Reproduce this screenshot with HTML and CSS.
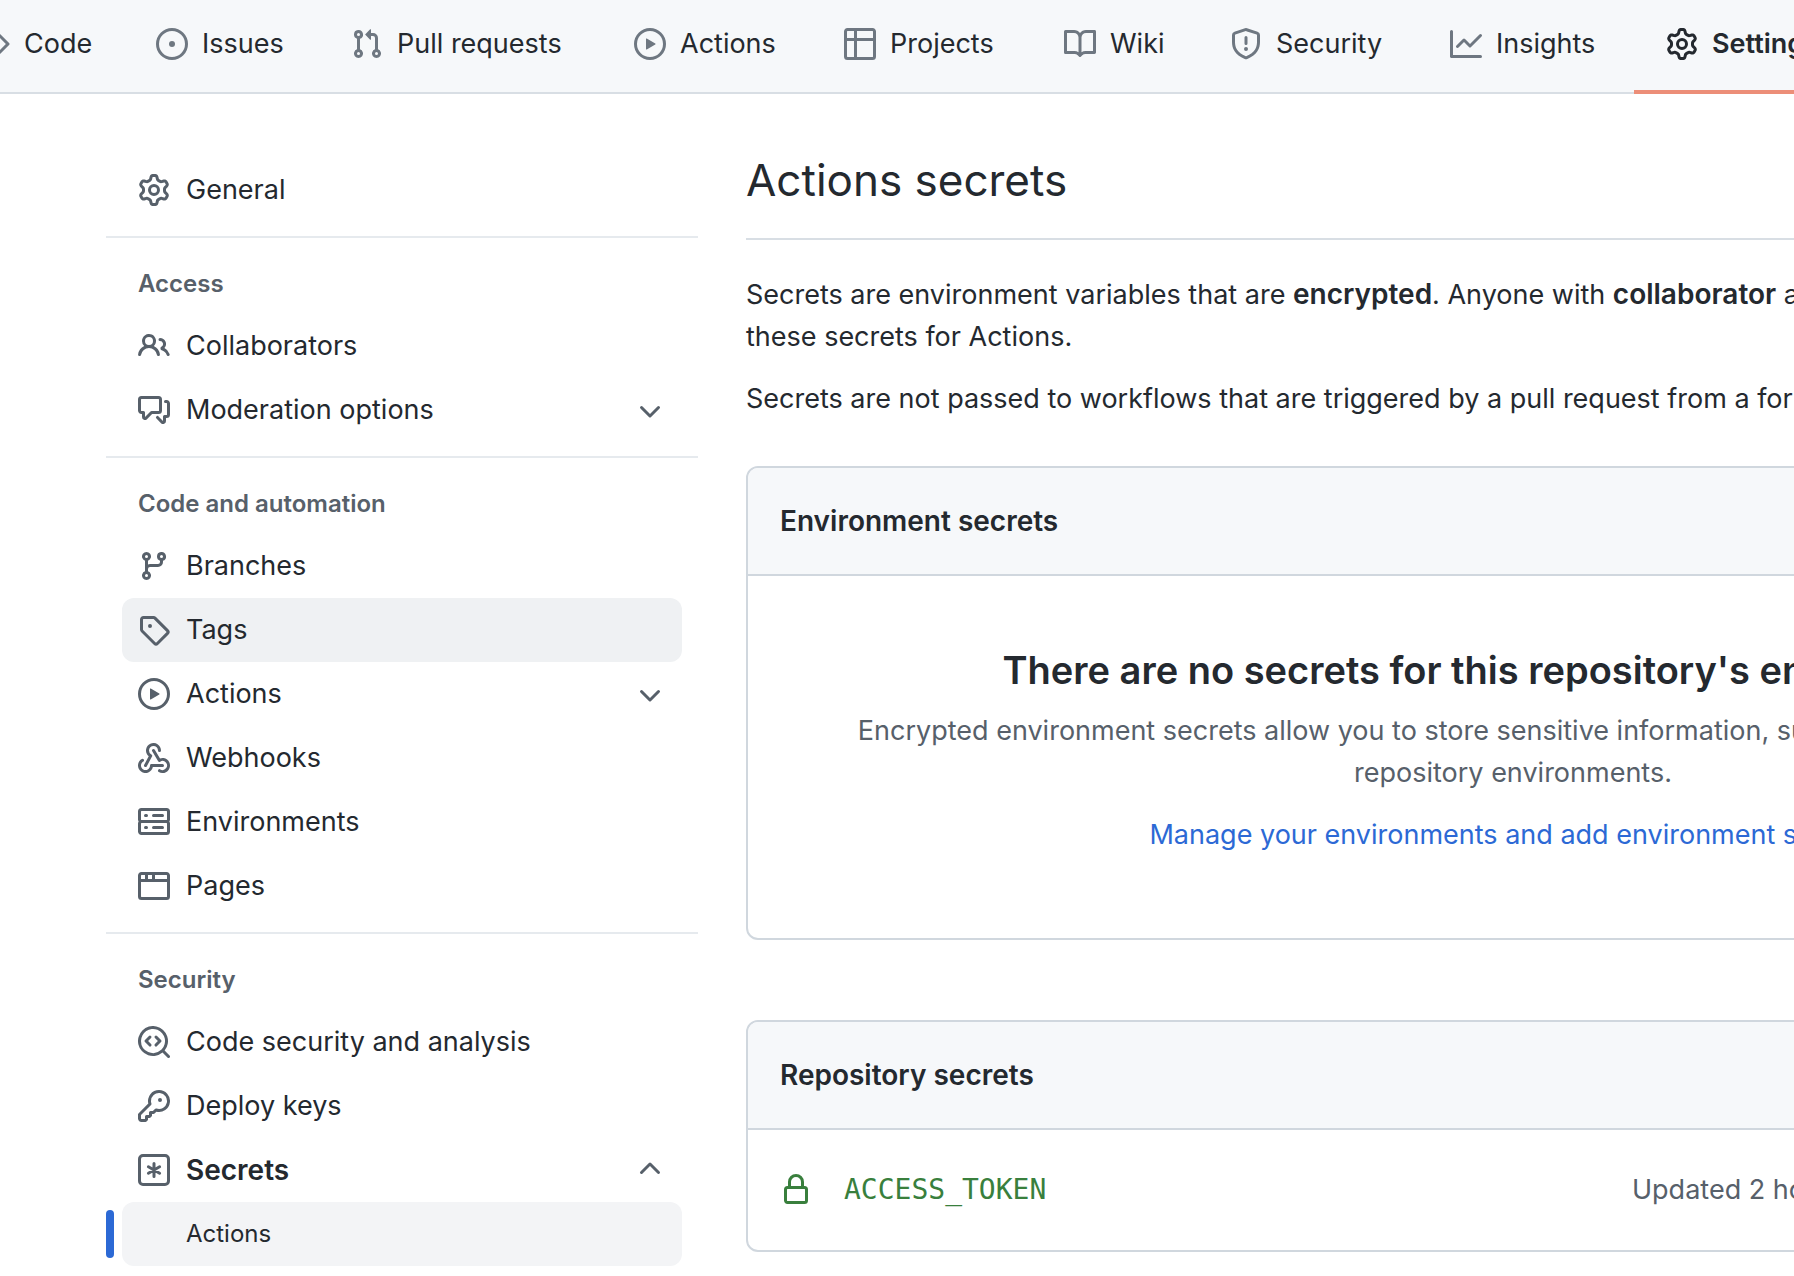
FILE: index.html
```html
<!DOCTYPE html>
<html lang="en">
<head>
<meta charset="utf-8">
<title>Actions secrets</title>
<link rel="stylesheet" href="styles.css">
</head>
<body>
<svg class="sprite" aria-hidden="true">
  <symbol id="i-code" viewBox="0 0 16 16"><path d="M4.72 3.22a.75.75 0 011.06 1.06L2.06 8l3.72 3.72a.75.75 0 11-1.06 1.06L.47 8.53a.75.75 0 010-1.06l4.25-4.25zm6.56 0a.75.75 0 10-1.06 1.06L13.94 8l-3.72 3.72a.75.75 0 101.06 1.06l4.25-4.25a.75.75 0 000-1.06l-4.25-4.25z"/></symbol>
  <symbol id="i-issue" viewBox="0 0 16 16"><path d="M8 9.5a1.5 1.5 0 100-3 1.5 1.5 0 000 3z"/><path fill-rule="evenodd" d="M8 0a8 8 0 100 16A8 8 0 008 0zM1.5 8a6.5 6.5 0 1113 0 6.5 6.5 0 01-13 0z"/></symbol>
  <symbol id="i-pr" viewBox="0 0 16 16"><path fill-rule="evenodd" d="M7.177 3.073L9.573.677A.25.25 0 0110 .854v4.792a.25.25 0 01-.427.177L7.177 3.427a.25.25 0 010-.354zM3.75 2.5a.75.75 0 100 1.5.75.75 0 000-1.5zm-2.25.75a2.25 2.25 0 113 2.122v5.256a2.251 2.251 0 11-1.5 0V5.372A2.25 2.25 0 011.5 3.25zM11 2.5h-1V4h1a1 1 0 011 1v5.628a2.251 2.251 0 101.5 0V5A2.5 2.5 0 0011 2.5zm1 10.25a.75.75 0 111.5 0 .75.75 0 01-1.5 0zM3.75 12a.75.75 0 100 1.5.75.75 0 000-1.5z"/></symbol>
  <symbol id="i-play" viewBox="0 0 16 16"><path fill-rule="evenodd" d="M1.5 8a6.5 6.5 0 1113 0 6.5 6.5 0 01-13 0zM8 0a8 8 0 100 16A8 8 0 008 0zM6.379 5.227A.25.25 0 006 5.442v5.117a.25.25 0 00.379.214l4.264-2.559a.25.25 0 000-.428L6.379 5.227z"/></symbol>
  <symbol id="i-table" viewBox="0 0 16 16"><path fill-rule="evenodd" d="M0 1.75C0 .784.784 0 1.75 0h12.5C15.216 0 16 .784 16 1.75v12.5A1.75 1.75 0 0114.25 16H1.75A1.75 1.75 0 010 14.25V1.75zM1.5 6.5v7.75c0 .138.112.25.25.25H5v-8H1.5zM5 5H1.5V1.75a.25.25 0 01.25-.25H5V5zm1.500 1.500v8h7.750a.25.25 0 00.25-.25V6.500h-8zm8-1.500h-8V1.500h7.750a.25.25 0 01.25.25V5z"/></symbol>
  <symbol id="i-book" viewBox="0 0 16 16"><path fill-rule="evenodd" d="M0 1.75A.75.75 0 01.75 1h4.253c1.227 0 2.317.59 3 1.501A3.744 3.744 0 0111.006 1h4.245a.75.75 0 01.75.75v10.5a.75.75 0 01-.75.75h-4.507a2.25 2.25 0 00-1.591.659l-.622.621a.75.75 0 01-1.060 0l-.622-.621A2.250 2.250 0 005.258 13H.75a.75.75 0 01-.75-.75V1.750zm8.755 3a2.250 2.250 0 012.250-2.250H14.500v9h-3.757c-.71 0-1.400.201-1.992.572l.004-7.322zm-1.504 7.324l.004-5.073-.002-2.253A2.250 2.250 0 005.003 2.500H1.500v9h3.757a3.750 3.750 0 011.994.574z"/></symbol>
  <symbol id="i-shield" viewBox="0 0 16 16"><path fill-rule="evenodd" d="M7.467.133a1.750 1.750 0 011.066 0l5.250 1.680A1.750 1.750 0 0115 3.480V7c0 1.566-.32 3.182-1.303 4.682-.983 1.498-2.585 2.813-5.032 3.855a1.700 1.700 0 01-1.330 0c-2.447-1.042-4.049-2.357-5.032-3.855C1.320 10.182 1 8.566 1 7V3.480a1.750 1.750 0 011.217-1.667l5.250-1.680zm.610 1.429a.25.25 0 00-.153 0l-5.250 1.680a.25.25 0 00-.174.238V7c0 1.358.275 2.666 1.057 3.860.784 1.194 2.121 2.340 4.366 3.297a.200.200 0 00.154 0c2.245-.956 3.582-2.104 4.366-3.298C13.225 9.666 13.500 8.360 13.500 7V3.480a.25.25 0 00-.174-.237l-5.250-1.680zM9 10.500a1 1 0 11-2 0 1 1 0 012 0zM8.750 4.750a.75.75 0 00-1.500 0v3a.75.75 0 001.500 0v-3z"/></symbol>
  <symbol id="i-graph" viewBox="0 0 16 16"><path fill-rule="evenodd" d="M1.500 1.750a.75.75 0 00-1.500 0v12.500c0 .414.336.75.75.75h14.500a.75.75 0 000-1.500H1.500V1.750zm14.280 2.530a.75.75 0 00-1.060-1.060L10 7.940 7.530 5.470a.75.75 0 00-1.060 0L3.220 8.720a.75.75 0 001.060 1.060L7 7.060l2.470 2.470a.75.75 0 001.060 0l5.250-5.250z"/></symbol>
  <symbol id="i-gear" viewBox="0 0 16 16"><path fill-rule="evenodd" d="M7.429 1.525a6.593 6.593 0 011.142 0c.036.003.108.036.137.146l.289 1.105c.147.56.55.967.997 1.189.174.086.341.183.501.290.417.278.970.423 1.530.270l1.102-.303c.110-.030.175.016.195.046.219.310.410.641.573.989.014.031.022.110-.059.190l-.815.806c-.411.406-.562.957-.530 1.456a4.588 4.588 0 010 .582c-.032.499.119 1.050.530 1.456l.815.806c.080.080.073.159.059.190a6.494 6.494 0 01-.573.990c-.020.029-.086.074-.195.045l-1.103-.303c-.559-.153-1.112-.008-1.529.270-.160.107-.327.204-.500.290-.449.222-.851.628-.998 1.189l-.289 1.105c-.029.110-.101.143-.137.146a6.613 6.613 0 01-1.142 0c-.036-.003-.108-.037-.137-.146l-.289-1.105c-.147-.560-.550-.967-.997-1.189a4.502 4.502 0 01-.501-.290c-.417-.278-.970-.423-1.530-.270l-1.102.303c-.110.030-.175-.016-.195-.046a6.492 6.492 0 01-.573-.989c-.014-.031-.022-.110.059-.190l.815-.806c.411-.406.562-.957.530-1.456a4.587 4.587 0 010-.582c.032-.499-.119-1.050-.530-1.456l-.815-.806c-.080-.080-.073-.159-.059-.190a6.440 6.440 0 01.573-.990c.020-.029.086-.075.195-.045l1.103.303c.559.153 1.112.008 1.529-.270.160-.107.327-.204.500-.290.449-.222.851-.628.998-1.189l.289-1.105c.029-.110.101-.143.137-.146zM8 0c-.236 0-.470.010-.701.030-.743.065-1.290.615-1.458 1.261l-.290 1.106c-.017.066-.078.158-.211.224a5.994 5.994 0 00-.668.386c-.123.082-.233.090-.300.071L3.270 2.776c-.644-.177-1.392.020-1.820.630a7.977 7.977 0 00-.704 1.217c-.315.675-.111 1.422.363 1.891l.815.806c.050.048.098.147.088.294a6.084 6.084 0 000 .772c.010.147-.038.246-.088.294l-.815.806c-.474.469-.678 1.216-.363 1.891.200.428.436.835.704 1.218.428.609 1.176.806 1.820.630l1.103-.303c.066-.019.176-.011.299.071.213.143.436.272.668.386.133.066.194.158.212.224l.289 1.106c.169.646.715 1.196 1.458 1.260a8.094 8.094 0 001.402 0c.743-.064 1.290-.614 1.458-1.260l.290-1.106c.017-.066.078-.158.211-.224a5.980 5.980 0 00.668-.386c.123-.082.233-.090.300-.071l1.102.302c.644.177 1.392-.020 1.820-.630.268-.382.505-.789.704-1.217.315-.675.111-1.422-.364-1.891l-.814-.806c-.050-.048-.098-.147-.088-.294a6.100 6.100 0 000-.772c-.010-.147.039-.246.088-.294l.814-.806c.475-.469.679-1.216.364-1.891a7.992 7.992 0 00-.704-1.218c-.428-.609-1.176-.806-1.820-.630l-1.103.303c-.066.019-.176.011-.299-.071a5.991 5.991 0 00-.668-.386c-.133-.066-.194-.158-.212-.224L10.160 1.290C9.990.645 9.444.095 8.701.031A8.094 8.094 0 008 0zm1.500 8a1.500 1.500 0 11-3 0 1.500 1.500 0 013 0zM11 8a3 3 0 11-6 0 3 3 0 016 0z"/></symbol>
  <symbol id="i-people" viewBox="0 0 16 16"><path fill-rule="evenodd" d="M5.500 3.500a2 2 0 100 4 2 2 0 000-4zM2 5.500a3.500 3.500 0 115.898 2.549 5.507 5.507 0 013.034 4.084.75.75 0 11-1.482.235 4.001 4.001 0 00-7.900 0 .75.75 0 01-1.482-.236A5.507 5.507 0 013.102 8.050 3.490 3.490 0 012 5.500zM11 4a.75.75 0 100 1.500 1.500 1.500 0 01.666 2.844.75.75 0 00-.416.672v.352a.75.75 0 00.574.730c1.200.289 2.162 1.200 2.522 2.372a.75.75 0 101.434-.440 5.010 5.010 0 00-2.560-3.012A3 3 0 0011 4z"/></symbol>
  <symbol id="i-discuss" viewBox="0 0 16 16"><path fill-rule="evenodd" d="M1.500 2.750a.25.25 0 01.25-.25h8.500a.25.25 0 01.25.25v5.500a.25.25 0 01-.25.25h-3.500a.75.75 0 00-.53.220L3.500 11.440V9.250a.75.75 0 00-.75-.75h-1a.25.25 0 01-.25-.25v-5.500zM1.750 1A1.750 1.750 0 000 2.750v5.500C0 9.216.784 10 1.750 10H2v1.543a1.457 1.457 0 002.487 1.030L7.061 10h3.189A1.750 1.750 0 0012 8.250v-5.500A1.750 1.750 0 0010.250 1h-8.500zM14.500 4.750a.25.25 0 00-.25-.25h-.5a.75.75 0 110-1.500h.5c.966 0 1.750.784 1.750 1.750v5.500A1.750 1.750 0 0114.250 12H14v1.543a1.457 1.457 0 01-2.487 1.030L9.220 12.280a.75.75 0 111.060-1.060l2.220 2.220v-2.190a.75.75 0 01.75-.75h1a.25.25 0 00.25-.25v-5.500z"/></symbol>
  <symbol id="i-branch" viewBox="0 0 16 16"><path fill-rule="evenodd" d="M11.750 2.500a.75.75 0 100 1.500.75.75 0 000-1.500zm-2.250.75a2.250 2.250 0 113 2.122V6A2.500 2.500 0 0110 8.500H6a1 1 0 00-1 1v1.128a2.251 2.251 0 11-1.500 0V5.372a2.250 2.250 0 111.500 0v1.836A2.492 2.492 0 016 7h4a1 1 0 001-1v-.628A2.250 2.250 0 019.500 3.250zM4.250 12a.75.75 0 100 1.500.75.75 0 000-1.500zM3.500 3.250a.75.75 0 111.500 0 .75.75 0 01-1.500 0z"/></symbol>
  <symbol id="i-tag" viewBox="0 0 16 16"><path fill-rule="evenodd" d="M2.500 7.775V2.750a.25.25 0 01.25-.25h5.025a.25.25 0 01.177.073l6.250 6.250a.25.25 0 010 .354l-5.025 5.025a.25.25 0 01-.354 0l-6.250-6.250a.25.25 0 01-.073-.177zm-1.500 0V2.750C1 1.784 1.784 1 2.750 1h5.025c.464 0 .910.184 1.238.513l6.250 6.250a1.750 1.750 0 010 2.474l-5.026 5.026a1.750 1.750 0 01-2.474 0l-6.250-6.250A1.750 1.750 0 011 7.775zM6 5a1 1 0 100 2 1 1 0 000-2z"/></symbol>
  <symbol id="i-webhook" viewBox="0 0 16 16"><path fill-rule="evenodd" d="M5.500 4.250a2.250 2.250 0 014.500 0 .75.75 0 001.500 0 3.750 3.750 0 10-6.140 2.889l-2.272 4.258a.75.75 0 001.324.706L7 7.250a.75.75 0 00-.309-1.015A2.250 2.250 0 015.500 4.250z"/><path fill-rule="evenodd" d="M7.364 3.607a.75.75 0 011.030.257l2.608 4.349a3.750 3.750 0 11-.628 6.785.75.75 0 01.752-1.299 2.250 2.250 0 10-.033-3.880.75.75 0 01-1.030-.256L7.107 4.636a.75.75 0 01.257-1.030z"/><path fill-rule="evenodd" d="M2.900 8.776A.75.75 0 012.625 9.800 2.250 2.250 0 106 11.750a.75.75 0 01.75-.751h5.500a.75.75 0 010 1.500H7.425a3.751 3.751 0 11-5.550-3.998.75.75 0 011.024.274z"/></symbol>
  <symbol id="i-server" viewBox="0 0 16 16"><path fill-rule="evenodd" d="M1.750 1A1.750 1.750 0 000 2.750v4c0 .372.116.717.314 1a1.742 1.742 0 00-.314 1v4c0 .966.784 1.750 1.750 1.750h12.500A1.750 1.750 0 0016 12.750v-4c0-.372-.116-.717-.314-1 .198-.283.314-.628.314-1v-4A1.750 1.750 0 0014.250 1H1.750zm0 7.500a.25.25 0 00-.25.25v4c0 .138.112.25.25.25h12.500a.25.25 0 00.25-.25v-4a.25.25 0 00-.25-.25H1.750zM14.250 7H1.750a.25.25 0 01-.25-.25v-4a.25.25 0 01.25-.25h12.500a.25.25 0 01.25.25v4a.25.25 0 01-.25.25zM7 4.750A.75.75 0 017.750 4h4.500a.75.75 0 010 1.500h-4.500A.75.75 0 017 4.750zM7.750 10a.75.75 0 000 1.500h4.500a.75.75 0 000-1.500h-4.500zM3 4.750A.75.75 0 013.750 4h.5a.75.75 0 010 1.500h-.5A.75.75 0 013 4.750zM3.750 10a.75.75 0 000 1.500h.5a.75.75 0 000-1.500h-.5z"/></symbol>
  <symbol id="i-browser" viewBox="0 0 16 16"><path fill-rule="evenodd" d="M0 2.750C0 1.784.784 1 1.750 1h12.500c.966 0 1.750.784 1.750 1.750v10.500A1.750 1.750 0 0114.250 15H1.750A1.750 1.750 0 010 13.250V2.750zm1.750-.25a.25.25 0 00-.25.25V4.500h2v-2H1.750zM5 2.500v2h2v-2H5zm3.500 0v2h6V2.750a.25.25 0 00-.25-.25H8.500zm6 3.500h-13v7.250c0 .138.112.25.25.25h12.500a.25.25 0 00.25-.25V6z"/></symbol>
  <symbol id="i-codescan" viewBox="0 0 16 16"><path d="M8.470 4.970a.75.75 0 000 1.060L9.940 7.500 8.470 8.970a.75.75 0 101.060 1.060l2-2a.75.75 0 000-1.060l-2-2a.75.75 0 00-1.060 0zM6.530 6.030a.75.75 0 00-1.060-1.060l-2 2a.75.75 0 000 1.060l2 2a.75.75 0 101.060-1.060L5.060 7.500l1.470-1.470z"/><path fill-rule="evenodd" d="M12.246 13.307a7.500 7.500 0 111.060-1.060l2.474 2.473a.75.75 0 11-1.060 1.060l-2.474-2.473zM1.500 7.500a6 6 0 1110.386 4.094.75.75 0 00-.292.293A6 6 0 011.500 7.500z"/></symbol>
  <symbol id="i-key" viewBox="0 0 16 16"><path fill-rule="evenodd" d="M6.500 5.500a4 4 0 112.731 3.795.75.75 0 00-.768.180L7.440 10.500H6.250a.75.75 0 00-.75.75v1.190l-.06.060H4.250a.75.75 0 00-.75.75v1.190l-.06.060H1.750a.25.25 0 01-.25-.25v-1.690l5.024-5.023a.75.75 0 00.181-.768A3.995 3.995 0 016.500 5.500zm4-5.500a5.500 5.500 0 00-5.348 6.788L.22 11.720a.75.75 0 00-.22.530v2C0 15.216.784 16 1.750 16h2a.75.75 0 00.53-.220l.500-.500a.75.75 0 00.22-.530V14h.75a.75.75 0 00.53-.220l.500-.500a.75.75 0 00.22-.530V12h.75a.75.75 0 00.53-.220l.932-.932A5.500 5.500 0 1010.500 0zm.500 6a1 1 0 100-2 1 1 0 000 2z"/></symbol>
  <symbol id="i-asterisk" viewBox="0 0 16 16"><rect x=".75" y=".75" width="14.500" height="14.500" rx="1.750" fill="none" stroke="currentColor" stroke-width="1.500"/><path fill="none" stroke="currentColor" stroke-width="1.500" stroke-linecap="round" d="M8 4.750v6.500M5.200 6.380l5.600 3.240M10.800 6.380L5.200 9.620"/></symbol>
  <symbol id="i-down" viewBox="0 0 16 16"><path fill-rule="evenodd" d="M12.780 6.220a.75.75 0 010 1.060l-4.250 4.250a.75.75 0 01-1.060 0L3.220 7.280a.75.75 0 011.060-1.060L8 9.940l3.720-3.720a.75.75 0 011.060 0z"/></symbol>
  <symbol id="i-lock" viewBox="0 0 16 16"><path fill-rule="evenodd" d="M4 4v2h-.25A1.750 1.750 0 002 7.750v5.500c0 .966.784 1.750 1.750 1.750h8.500A1.750 1.750 0 0014 13.250v-5.500A1.750 1.750 0 0012.250 6H12V4a4 4 0 10-8 0zm6.500 2V4a2.500 2.500 0 10-5 0v2h5zM12 7.500h.25a.25.25 0 01.25.25v5.500a.25.25 0 01-.25.25h-8.500a.25.25 0 01-.25-.25v-5.500a.25.25 0 01.25-.25H12z"/></symbol>
</svg>

<nav class="tabs" aria-label="Repository">
  <a class="tab" href="#code"><svg class="icon"><use href="#i-code"/></svg>Code</a>
  <a class="tab" href="#issues"><svg class="icon"><use href="#i-issue"/></svg>Issues</a>
  <a class="tab" href="#pulls"><svg class="icon"><use href="#i-pr"/></svg>Pull requests</a>
  <a class="tab" href="#actions"><svg class="icon"><use href="#i-play"/></svg>Actions</a>
  <a class="tab" href="#projects"><svg class="icon"><use href="#i-table"/></svg>Projects</a>
  <a class="tab" href="#wiki"><svg class="icon"><use href="#i-book"/></svg>Wiki</a>
  <a class="tab" href="#security"><svg class="icon"><use href="#i-shield"/></svg>Security</a>
  <a class="tab" href="#insights"><svg class="icon"><use href="#i-graph"/></svg>Insights</a>
  <a class="tab tab-current" href="#settings" aria-current="page"><svg class="icon"><use href="#i-gear"/></svg>Settings</a>
</nav>

<div class="layout">
  <nav class="sidebar" aria-label="Settings">
    <ul class="group">
      <li><a class="item" href="#general"><svg class="icon"><use href="#i-gear"/></svg>General</a></li>
    </ul>
    <section class="section">
      <h2 class="group-title">Access</h2>
      <ul class="group">
        <li><a class="item" href="#collaborators"><svg class="icon"><use href="#i-people"/></svg>Collaborators</a></li>
        <li><button class="item" type="button" aria-expanded="false"><svg class="icon"><use href="#i-discuss"/></svg>Moderation options<svg class="icon chevron"><use href="#i-down"/></svg></button></li>
      </ul>
    </section>
    <section class="section">
      <h2 class="group-title">Code and automation</h2>
      <ul class="group">
        <li><a class="item" href="#branches"><svg class="icon"><use href="#i-branch"/></svg>Branches</a></li>
        <li><a class="item item-hover" href="#tags"><svg class="icon"><use href="#i-tag"/></svg>Tags</a></li>
        <li><button class="item" type="button" aria-expanded="false"><svg class="icon"><use href="#i-play"/></svg>Actions<svg class="icon chevron"><use href="#i-down"/></svg></button></li>
        <li><a class="item" href="#webhooks"><svg class="icon"><use href="#i-webhook"/></svg>Webhooks</a></li>
        <li><a class="item" href="#environments"><svg class="icon"><use href="#i-server"/></svg>Environments</a></li>
        <li><a class="item" href="#pages"><svg class="icon"><use href="#i-browser"/></svg>Pages</a></li>
      </ul>
    </section>
    <section class="section">
      <h2 class="group-title">Security</h2>
      <ul class="group">
        <li><a class="item" href="#analysis"><svg class="icon"><use href="#i-codescan"/></svg>Code security and analysis</a></li>
        <li><a class="item" href="#keys"><svg class="icon"><use href="#i-key"/></svg>Deploy keys</a></li>
        <li><button class="item item-open" type="button" aria-expanded="true"><svg class="icon"><use href="#i-asterisk"/></svg>Secrets<svg class="icon chevron chevron-up"><use href="#i-down"/></svg></button></li>
        <li><a class="item item-sub" href="#secrets-actions" aria-current="page">Actions</a></li>
      </ul>
    </section>
  </nav>

  <main class="content">
    <h1 class="title">Actions secrets</h1>
    <p class="text">Secrets are environment variables that are <strong>encrypted</strong>. Anyone with <strong>collaborator</strong> access to this repository can use these secrets for Actions.</p>
    <p class="text">Secrets are not passed to workflows that are triggered by a pull request from a fork.</p>

    <section class="box">
      <h2 class="box-header">Environment secrets</h2>
      <div class="blank">
        <h3 class="blank-title">There are no secrets for this repository's environments.</h3>
        <p class="blank-text">Encrypted environment secrets allow you to store sensitive information, such as access tokens, in your repository environments.</p>
        <a class="link" href="#environments">Manage your environments and add environment secrets</a>
      </div>
    </section>

    <section class="box">
      <h2 class="box-header">Repository secrets</h2>
      <div class="secret">
        <svg class="icon lock"><use href="#i-lock"/></svg>
        <code class="secret-name">ACCESS_TOKEN</code>
        <span class="secret-date">Updated 2 hours ago</span>
      </div>
    </section>
  </main>
</div>
</body>
</html>
```
FILE: styles.css
```css
* {
  box-sizing: border-box;
}

body {
  margin: 0;
  overflow-x: hidden;
  background: #fff;
  color: #24292f;
  font: 27px/42px Inter, "Liberation Sans", sans-serif;
}

h1, h2, h3, p, ul {
  margin: 0;
  padding: 0;
}

ul {
  list-style: none;
}

a {
  color: inherit;
  text-decoration: none;
}

strong {
  font-size: 28px;
  font-weight: 600;
  line-height: 1;
}

.sprite {
  display: none;
}

.icon {
  flex: none;
  width: 32px;
  height: 32px;
  fill: currentColor;
  color: #57606a;
}

.tabs {
  display: grid;
  grid-template-columns: 178px 195px 283px 210px 220px 166px 220px 216px max-content;
  height: 94px;
  margin-left: -54px;
  background: #f6f8fa;
  box-shadow: inset 0 -2px #d8dee4;
}

.tab {
  display: flex;
  align-items: center;
  gap: 14px;
  padding: 0 32px 6px;
  white-space: nowrap;
}

.tab .icon {
  color: #6e7781;
}

.tab-current {
  font-weight: 600;
  box-shadow: inset 0 -4px #ec8e78;
}

.tab-current .icon {
  color: inherit;
}

.layout {
  display: grid;
  grid-template-columns: 592px 1534px;
  gap: 48px;
  padding: 48px 106px 10px;
}

.sidebar {
  padding-top: 16px;
}

.section {
  margin-top: 14px;
  border-top: 2px solid #e6eaee;
}

.group {
  padding: 0 16px;
}

.group-title {
  padding: 28px 32px 12px;
  color: #57606a;
  font-size: 24px;
  font-weight: 600;
  line-height: 36px;
}

.item {
  position: relative;
  display: flex;
  align-items: center;
  gap: 16px;
  width: 100%;
  height: 64px;
  padding: 0 16px;
  border: 0;
  border-radius: 12px;
  background: none;
  color: inherit;
  font: inherit;
  text-align: left;
}

.item-hover {
  background: #eff1f3;
}

.item-open {
  font-size: 28px;
  font-weight: 600;
}

.item-sub {
  padding-left: 64px;
  background: #f3f4f6;
  font-size: 24px;
}

.item-sub::before {
  content: "";
  position: absolute;
  top: 8px;
  bottom: 8px;
  left: -16px;
  width: 8px;
  border-radius: 4px;
  background: #2c69d5;
}

.chevron {
  margin-left: auto;
}

.chevron-up {
  transform: rotate(180deg);
}

.title {
  margin-bottom: 34px;
  padding: 2px 0 22px;
  border-bottom: 2px solid #d8dee4;
  font-size: 44px;
  font-weight: 400;
  line-height: 72px;
}

.text {
  margin-bottom: 20px;
}

.box {
  margin-top: 46px;
  border: 2px solid #d0d7de;
  border-radius: 12px;
}

.box + .box {
  margin-top: 80px;
}

.box-header {
  padding: 32px;
  border-bottom: 2px solid #d0d7de;
  border-radius: 10px 10px 0 0;
  background: #f6f8fa;
  font-size: 28px;
  font-weight: 600;
}

.blank {
  padding: 64px 80px 82px;
  text-align: center;
}

.blank-title {
  margin-bottom: 10px;
  font-size: 38px;
  font-weight: 600;
  line-height: 60px;
}

.blank-text {
  margin-bottom: 20px;
  color: #57606a;
}

.link {
  color: #2c69d5;
}

.secret {
  display: grid;
  grid-template-columns: 32px 756px 1fr;
  gap: 32px;
  align-items: center;
  height: 120px;
  padding: 0 32px;
}

.lock,
.secret-name {
  color: #397f3d;
}

.secret-name {
  font: 28px/42px "DejaVu Sans Mono", monospace;
}

.secret-date {
  color: #57606a;
}
```
